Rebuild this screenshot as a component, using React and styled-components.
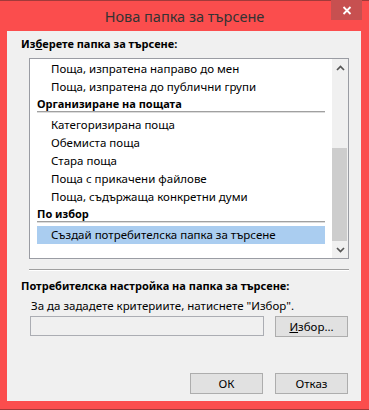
import styled, { createGlobalStyle } from 'styled-components';

const GlobalStyle = createGlobalStyle`
body{
    margin: 0;
    font-family: "Noto Sans", "DejaVu Sans", sans-serif;
    font-size: 11.5px;
    color: #000;
}
`;

const topItems = [
    'Поща, изпратена направо до мен',
    'Поща, изпратена до публични групи',
];

const organizeItems = [
    'Категоризирана поща',
    'Обемиста поща',
    'Стара поща',
    'Поща с прикачени файлове',
    'Поща, съдържаща конкретни думи',
];

const Chevron = ({ up }) => (
    <svg width="9" height="6" viewBox="0 0 9 6">
        <path d={up ? 'M1 5 L4.5 1.5 L8 5' : 'M1 1 L4.5 4.5 L8 1'} fill="none" stroke="#555" strokeWidth="1.7" />
    </svg>
);

const App = () => {
    return (
        <>
            <GlobalStyle />
            <Window>
                <TitleBar>
                    <Title>Нова папка за търсене</Title>
                    <CloseButton>
                        <svg width="10" height="9" viewBox="0 0 10 9">
                            <path d="M1.5 1 L8.5 8 M8.5 1 L1.5 8" stroke="#fff" strokeWidth="1.8" />
                        </svg>
                    </CloseButton>
                </TitleBar>
                <Body>
                    <SectionLabel>Из<u>б</u>ерете папка за търсене:</SectionLabel>
                    <ListBox>
                        <List>
                            {topItems.map((t) => <Item key={t}>{t}</Item>)}
                            <Header>Организиране на пощата</Header>
                            {organizeItems.map((t) => <Item key={t}>{t}</Item>)}
                            <Header>По избор</Header>
                            <Item selected>Създай потребителска папка за търсене</Item>
                        </List>
                        <ScrollBar>
                            <Arrow><Chevron up /></Arrow>
                            <Track><Thumb /></Track>
                            <Arrow><Chevron /></Arrow>
                        </ScrollBar>
                    </ListBox>
                    <Separator />
                    <SectionLabel top={8}>Потребителска настройка на папка за търсене:</SectionLabel>
                    <Hint>За да зададете критериите, натиснете "Избор".</Hint>
                    <CriteriaRow>
                        <Input />
                        <Button><u>И</u>збор...</Button>
                    </CriteriaRow>
                    <Footer>
                        <Button>ОК</Button>
                        <Button>Отказ</Button>
                    </Footer>
                </Body>
            </Window>
        </>
    )
};

const Window = styled.div`
width: 369px;
height: 410px;
box-sizing: border-box;
background-color: #fb4d4d;
border-top: 1px solid #a33a3a;
border-bottom: 1px solid #a33a3a;
display: flex;
flex-direction: column;
`;

const TitleBar = styled.div`
position: relative;
height: 30px;
display: flex;
align-items: center;
justify-content: center;
`;

const Title = styled.div`
font-size: 14.5px;
color: #333;
margin-top: -1px;
`;

const CloseButton = styled.div`
position: absolute;
top: -1px;
right: 7px;
width: 31px;
height: 20px;
background-color: #c75050;
display: flex;
align-items: center;
justify-content: center;
`;

const Body = styled.div`
flex: 1;
margin: 0 8px 8px 7px;
padding: 5px 13px 0 14px;
background-color: #f0f0f0;
display: flex;
flex-direction: column;
`;

const SectionLabel = styled.div`
font-weight: bold;
font-size: 11px;
line-height: 16px;
margin-top: ${(p) => p.top || 0}px;
u{
    text-decoration-thickness: 1px;
}
`;

const ListBox = styled.div`
margin: 6px 0 0 8px;
width: 320px;
height: 201px;
box-sizing: border-box;
border: 1px solid #9a9ca3;
background-color: #fff;
display: flex;
`;

const List = styled.div`
flex: 1;
padding: 1px 7px 0;
overflow: hidden;
`;

const Item = styled.div`
height: 18px;
line-height: 18px;
padding-left: 14px;
white-space: nowrap;
background-color: ${(p) => (p.selected ? '#aacdf0' : 'transparent')};
`;

const Header = styled.div`
height: 15px;
line-height: 15px;
font-weight: bold;
font-size: 11px;
border-bottom: 1px solid #a0a0a0;
box-shadow: 0 1px 0 #dcdcdc;
margin-bottom: 4px;
`;

const ScrollBar = styled.div`
width: 16px;
background-color: #f0f0f0;
display: flex;
flex-direction: column;
`;

const Arrow = styled.div`
height: 17px;
display: flex;
align-items: center;
justify-content: center;
`;

const Track = styled.div`
flex: 1;
display: flex;
flex-direction: column;
justify-content: flex-end;
`;

const Thumb = styled.div`
height: 93px;
margin: 0 1px 0 0;
background-color: #cdcdcd;
`;

const Separator = styled.div`
margin: 10px 0 0 8px;
width: 320px;
height: 1px;
background-color: #a0a0a0;
box-shadow: 0 1px 0 #fff;
`;

const Hint = styled.div`
line-height: 16px;
margin: 4px 0 0 10px;
`;

const CriteriaRow = styled.div`
display: flex;
align-items: flex-start;
gap: 11px;
margin: 2px 0 0 9px;
`;

const Input = styled.div`
width: 234px;
height: 20px;
box-sizing: border-box;
border: 1px solid #abadb3;
background-color: #f0f0f0;
`;

const Button = styled.div`
width: 73px;
height: 21px;
box-sizing: border-box;
border: 1px solid #adadad;
background-color: #e1e1e1;
display: flex;
align-items: center;
justify-content: center;
u{
    text-decoration-thickness: 1px;
}
`;

const Footer = styled.div`
display: flex;
justify-content: flex-end;
gap: 12px;
margin-top: 36px;
`;

export default App;
